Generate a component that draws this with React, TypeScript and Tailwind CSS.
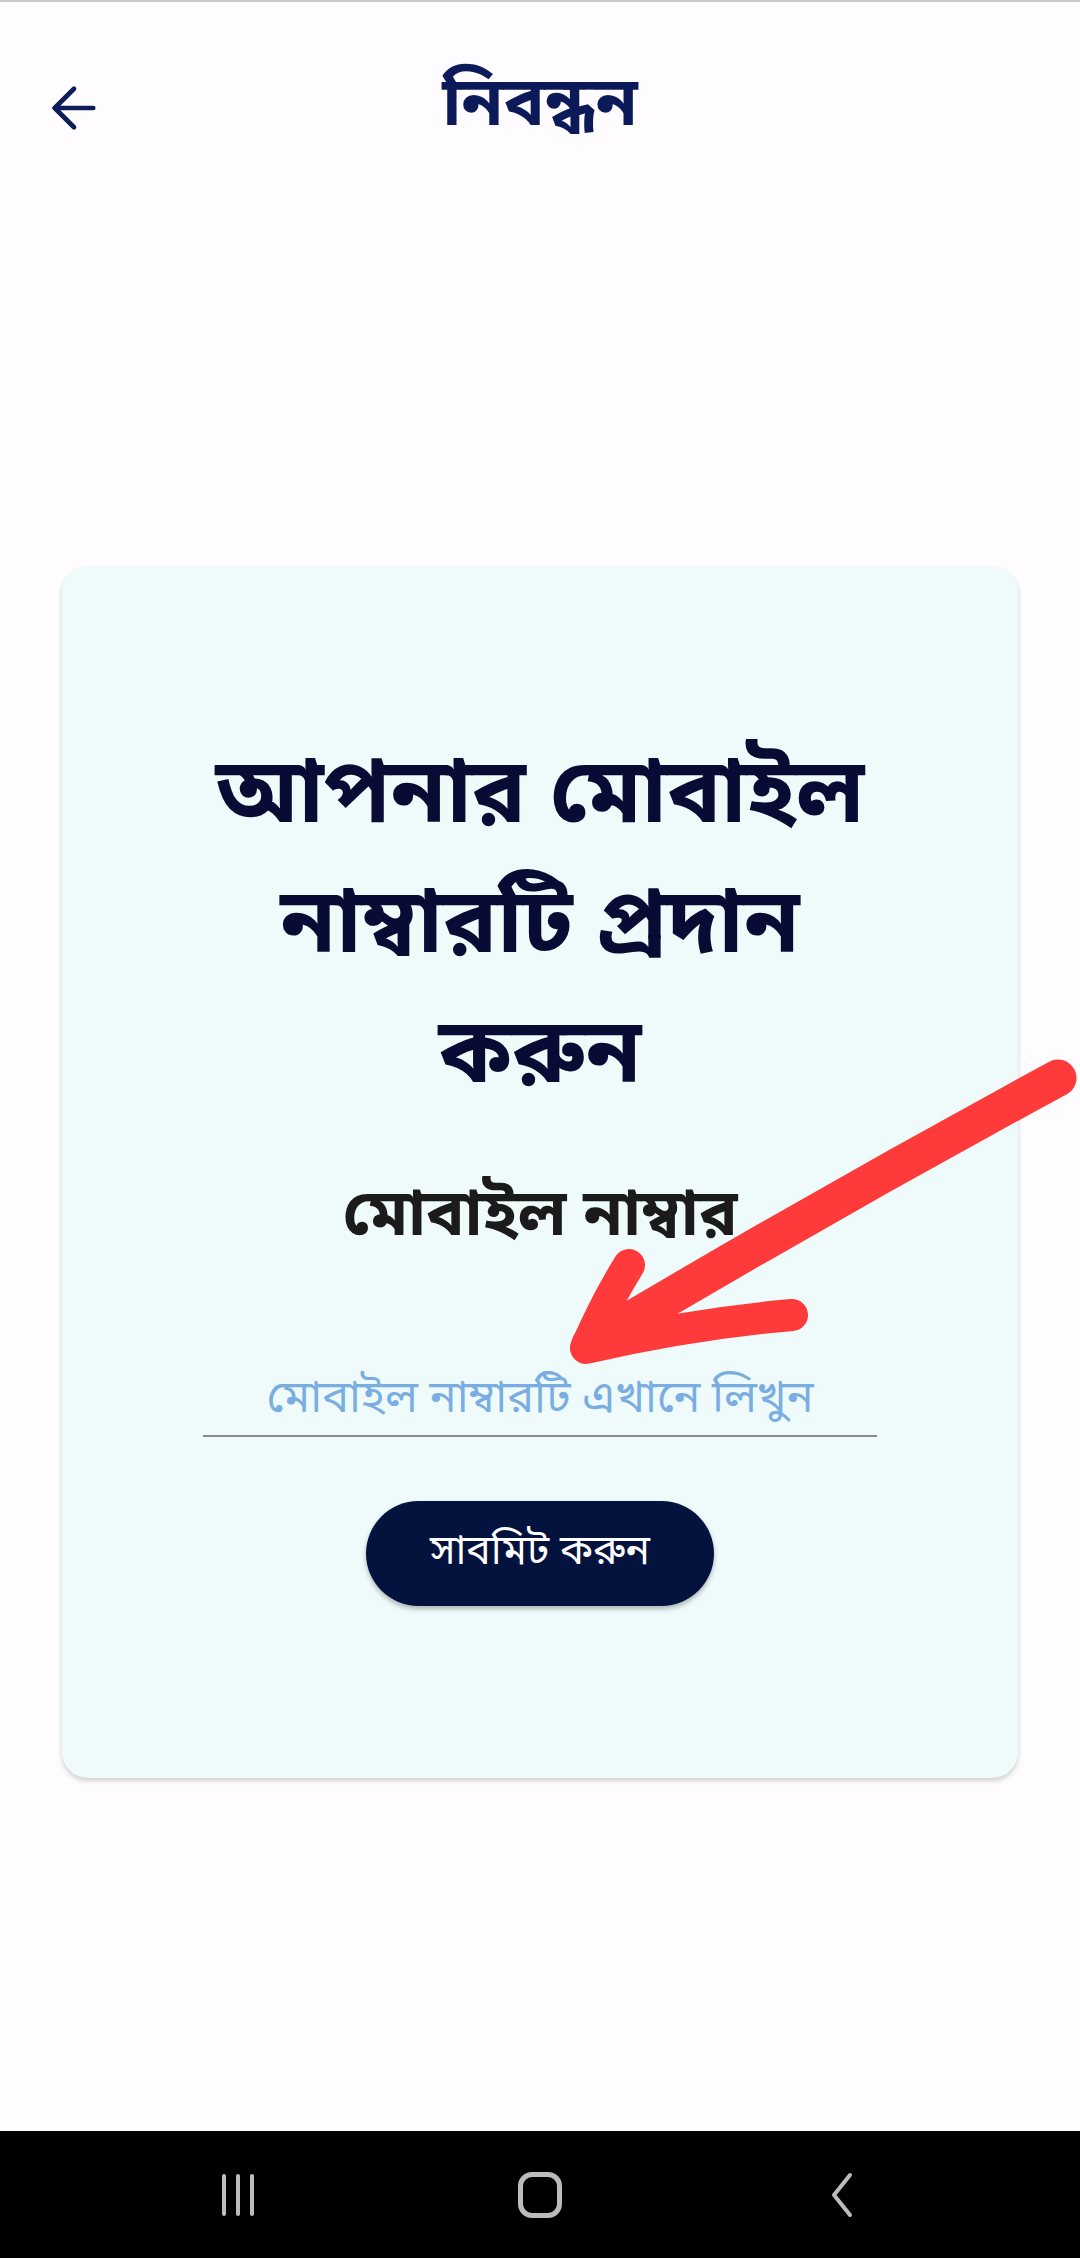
import React from 'react';
import { ArrowLeft } from 'lucide-react';

const bn = "font-['Noto_Sans_Bengali','Noto_Sans','DejaVu_Sans',sans-serif]";

const RedArrow: React.FC = () => (
  <svg
    className="pointer-events-none absolute left-0 top-0"
    width={1080}
    height={2258}
    viewBox="0 0 1080 2258"
    fill="none"
  >
    <g stroke="#fe3a3a" strokeLinecap="round" strokeLinejoin="round">
      <path d="M1058 1076 Q820 1205 590 1342" strokeWidth={37} />
      <path d="M629 1263 Q606 1300 586 1346 Q690 1322 792 1313" strokeWidth={32} />
    </g>
  </svg>
);

const NavBar: React.FC = () => (
  <div className="flex h-[127px] items-center justify-center gap-[242px] bg-black">
    {/* recents */}
    <div className="flex w-[60px] justify-center gap-[10px]">
      <span className="h-[42px] w-[4px] rounded-full bg-[#bcbcbc]" />
      <span className="h-[42px] w-[4px] rounded-full bg-[#bcbcbc]" />
      <span className="h-[42px] w-[4px] rounded-full bg-[#bcbcbc]" />
    </div>
    {/* home */}
    <div className="flex w-[60px] justify-center">
      <span className="h-[46px] w-[44px] rounded-[14px] border-[5px] border-[#bcbcbc]" />
    </div>
    {/* back */}
    <div className="flex w-[60px] justify-center">
      <svg width={26} height={46} viewBox="0 0 26 46" fill="none">
        <path d="M21 3 L5 23 L21 43" stroke="#bcbcbc" strokeWidth={4} strokeLinecap="round" strokeLinejoin="round" />
      </svg>
    </div>
  </div>
);

export default function App() {
  return (
    <div className={`relative flex h-[2258px] w-[1080px] flex-col overflow-hidden border-t-2 border-[#c8c8c8] bg-[#fefcff] ${bn}`}>
      {/* Header */}
      <div className="grid h-[211px] grid-cols-[1fr_auto_1fr] items-center px-[41px]">
        <button className="flex h-[66px] w-[66px] items-center justify-center text-[#0d1b57]">
          <ArrowLeft size={66} strokeWidth={1.7} />
        </button>
        <h1 className="text-[68px] font-bold leading-none text-[#0c1a5a]">নিবন্ধন</h1>
        <div />
      </div>

      {/* Content */}
      <div className="flex flex-1 items-center justify-center">
        <div className="flex h-[1212px] w-[956px] flex-col items-center rounded-[26px] bg-[#effbfb] pt-[168px] shadow-[0_3px_5px_rgba(0,0,0,0.18)]">
          <h2 className="max-w-[700px] text-center text-[90px] font-bold leading-[130px] text-[#080c35]">
            আপনার মোবাইল নাম্বারটি প্রদান করুন
          </h2>
          <p className="mt-[63px] text-[64px] font-bold leading-none text-[#1b1b1b]">মোবাইল নাম্বার</p>
          <div className="mt-[120px] w-[674px] border-b-2 border-[#8a8a8a] pb-[4px] text-center">
            <input
              className="w-full bg-transparent text-center text-[45px] leading-[60px] text-[#1b1b1b] outline-none placeholder:text-[#7aaee2]"
              placeholder="মোবাইল নাম্বারটি এখানে লিখুন"
            />
          </div>
          <button className="mt-[64px] flex h-[105px] w-[348px] items-center justify-center rounded-full bg-[#04133d] text-[41px] text-white shadow-[0_3px_5px_rgba(0,0,0,0.28)]">
            সাবমিট করুন
          </button>
        </div>
      </div>

      <NavBar />
      <RedArrow />
    </div>
  );
}
